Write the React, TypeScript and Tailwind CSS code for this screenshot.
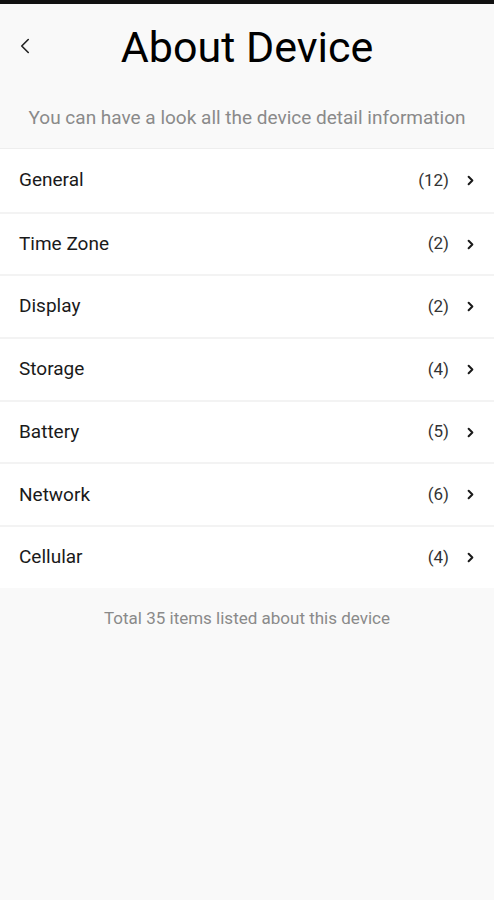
import { ChevronLeft, ChevronRight } from "lucide-react";

const sections = [
  { name: "General", count: 12 },
  { name: "Time Zone", count: 2 },
  { name: "Display", count: 2 },
  { name: "Storage", count: 4 },
  { name: "Battery", count: 5 },
  { name: "Network", count: 6 },
  { name: "Cellular", count: 4 },
];

export default function App() {
  const total = sections.reduce((sum, s) => sum + s.count, 0);

  return (
    <div className="h-[900px] bg-[#f9f9f9] border-t-[4px] border-[#111] font-['Roboto',sans-serif] flex flex-col">
      {/* Header */}
      <div className="relative h-[84px] flex items-center justify-center">
        <button className="absolute left-[12px] top-[29px] text-[#222]">
          <ChevronLeft size={26} strokeWidth={1.5} />
        </button>
        <h1 className="text-[43px] text-black leading-none mt-[2px]">About Device</h1>
      </div>

      <p className="h-[60px] flex items-center justify-center text-[19px] text-[#8a8a8a]">
        You can have a look all the device detail information
      </p>

      {/* Sections */}
      <div className="bg-white border-t border-[#eeeeee]">
        {sections.map((s, i) => (
          <div
            key={s.name}
            className={`h-[62.7px] flex items-center pl-[19px] pr-[16px] ${i > 0 ? "border-t-2 border-[#f3f3f3]" : ""}`}
          >
            <span className="flex-1 text-[19px] text-[#1a1a1a]">{s.name}</span>
            <span className="text-[17px] text-[#333]">({s.count})</span>
            <ChevronRight size={15} strokeWidth={3.2} className="ml-[14px] text-[#1a1a1a]" />
          </div>
        ))}
      </div>

      <p className="h-[62px] flex items-center justify-center text-[17px] text-[#8a8a8a]">
        Total {total} items listed about this device
      </p>
    </div>
  );
}
